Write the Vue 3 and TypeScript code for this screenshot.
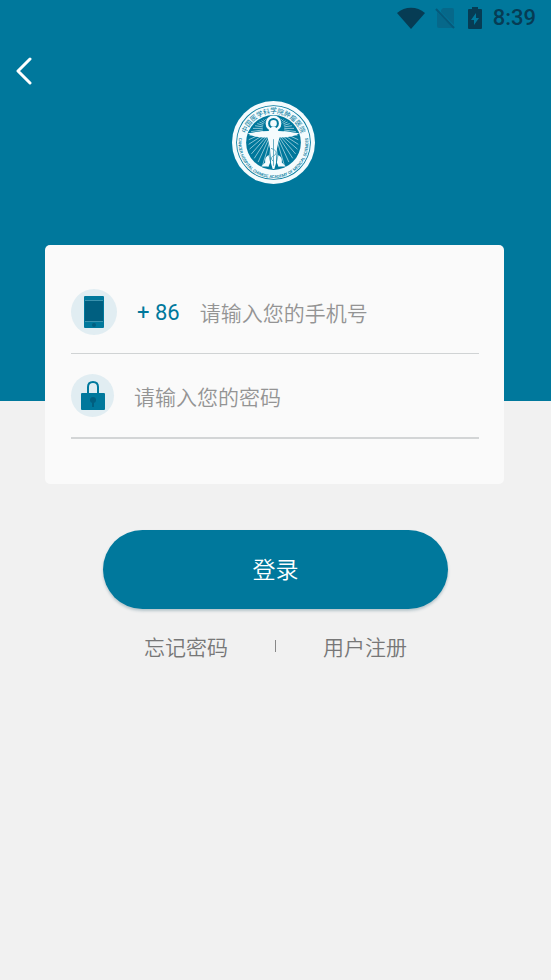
<script setup lang="ts">
import { ref } from 'vue'

const phone = ref('')
const password = ref('')

interface Ray {
  x1: number
  y1: number
  x2: number
  y2: number
}

// Light rays fanning out from the head of the emblem's figure.
const rays: Ray[] = Array.from({ length: 44 }, (_, i) => {
  const angle = (i / 44) * Math.PI * 2
  const cx = 50
  const cy = 33
  const dx = Math.cos(angle)
  const dy = Math.sin(angle)
  // Distance from the head to the inner ring (centre 50,50, radius 30).
  const b = dy * (cy - 50)
  const reach = -b + Math.sqrt(b * b + 30 * 30 - (cy - 50) ** 2)
  return {
    x1: cx + dx * 13,
    y1: cy + dy * 13,
    x2: cx + dx * Math.max(reach, 13),
    y2: cy + dy * Math.max(reach, 13),
  }
})
</script>

<template>
  <div class="page">
    <header class="hero">
      <div class="status">
        <svg class="wifi" viewBox="0 0 28 22" aria-hidden="true">
          <path d="M0 6 C8 -1 20 -1 28 6 L14 22 Z" />
        </svg>
        <svg class="sim" viewBox="0 0 20 22" aria-hidden="true">
          <path class="faint" d="M8 1 H17 Q19 1 19 3 V18 L6 5 V3 Z M2 5 L18 21 H4 Q2 21 2 19 Z" />
          <path class="slash" d="M1 2 L19 21" />
        </svg>
        <svg class="battery" viewBox="0 0 14 22" aria-hidden="true">
          <path fill-rule="evenodd" d="M4 0 H10 V2 H13 Q14 2 14 3 V21 Q14 22 13 22 H1 Q0 22 0 21 V3 Q0 2 1 2 H4 Z M8 6 L3 13 H6 V18 L11 11 H8 Z" />
        </svg>
        <span class="time">8:39</span>
      </div>
      <nav class="nav">
        <button class="back" type="button" aria-label="返回">
          <svg viewBox="0 0 18 28" aria-hidden="true">
            <path d="M15 2 L3 14 L15 26" />
          </svg>
        </button>
      </nav>
      <svg class="emblem" viewBox="0 0 100 100" aria-hidden="true">
        <defs>
          <path id="arc-top" d="M15 50 A35 35 0 0 1 85 50" />
          <path id="arc-bottom" d="M12 33 A42 42 0 1 0 88 33" />
        </defs>
        <circle class="white" cx="50" cy="50" r="50" />
        <circle class="teal" cx="50" cy="50" r="45" />
        <circle class="white" cx="50" cy="50" r="44" />
        <circle class="teal" cx="50" cy="50" r="33" />
        <text class="ring cjk"><textPath href="#arc-top" startOffset="50%">中国医学科学院肿瘤医院</textPath></text>
        <text class="ring latin"><textPath href="#arc-bottom" startOffset="50%">CANCER HOSPITAL CHINESE ACADEMY OF MEDICAL SCIENCES</textPath></text>
        <line v-for="(ray, i) in rays" :key="i" class="ray" :x1="ray.x1" :y1="ray.y1" :x2="ray.x2" :y2="ray.y2" />
        <circle class="halo" cx="50" cy="27" r="8" />
        <circle class="white" cx="50" cy="27" r="4" />
        <path class="white" d="M19 39 Q34 36 44 36 L48 31 H52 L56 36 Q66 36 81 39 Q76 44 57 44 L54 58 L53 75 L51 82 H49 L47 75 L46 58 L43 44 Q24 44 19 39 Z" />
        <path class="white" d="M44 65 Q39 68 40 74 L35 79 H44 L46 74 Z M56 65 Q61 68 60 74 L65 79 H56 L54 74 Z" />
        <path class="teal-line" d="M50 46 V78 M47 57 Q56 60 52 65 Q44 68 50 73" />
      </svg>
    </header>

    <form class="form" @submit.prevent>
      <div class="card">
        <div class="field">
          <label class="badge large" for="phone" aria-label="手机号">
            <svg class="phone-icon" viewBox="0 0 20 32" aria-hidden="true">
              <rect class="teal" width="20" height="32" rx="1" />
              <rect class="screen" x="1" y="5" width="18" height="20" />
              <rect class="bar" x="1" y="4" width="18" height="1" />
              <rect class="bar" x="1" y="25" width="18" height="1" />
              <circle class="screen" cx="10" cy="29" r="2" />
            </svg>
          </label>
          <span class="code">+ 86</span>
          <input id="phone" v-model="phone" class="entry" type="tel" placeholder="请输入您的手机号" />
        </div>
        <div class="field second">
          <label class="badge" for="password" aria-label="密码">
            <svg class="lock-icon" viewBox="0 0 24 30" aria-hidden="true">
              <path class="shackle" d="M7 14 V7 Q7 2 12 2 Q17 2 17 7 V14" />
              <rect class="teal" y="13" width="24" height="17" rx="1" />
              <circle class="screen" cx="12" cy="20" r="3" />
              <rect class="screen" x="11" y="20" width="2" height="7" />
            </svg>
          </label>
          <input id="password" v-model="password" class="entry" type="password" placeholder="请输入您的密码" />
        </div>
      </div>
      <button class="submit" type="submit">登录</button>
      <div class="links">
        <a href="#forgot">忘记密码</a>
        <span class="divider"></span>
        <a href="#register">用户注册</a>
      </div>
    </form>
  </div>
</template>

<style>
body {
  margin: 0;
  background: #f1f1f1;
}
</style>

<style scoped>
.page {
  min-height: 100vh;
  background: #f1f1f1;
  font-family: Roboto, "Noto Sans CJK SC", sans-serif;
}

.hero {
  display: flex;
  flex-direction: column;
  box-sizing: border-box;
  padding-bottom: 217px;
  background: #00789c;
}

.status {
  display: flex;
  align-items: center;
  justify-content: flex-end;
  height: 36px;
  padding-right: 15px;
  color: #063c54;
}

.status svg {
  fill: #063c54;
}

.wifi {
  width: 28px;
  height: 22px;
  margin-right: 10px;
}

.sim {
  width: 20px;
  height: 22px;
  margin-right: 13px;
}

.status .faint {
  fill: #06688a;
}

.sim .slash {
  stroke: #06597a;
  stroke-width: 2;
}

.battery {
  width: 14px;
  height: 22px;
  margin-right: 11px;
}

.time {
  font-size: 22px;
  line-height: 36px;
  font-weight: 500;
}

.nav {
  display: flex;
  height: 65px;
  padding-left: 15px;
}

.back {
  display: flex;
  align-items: center;
  width: 44px;
  height: 70px;
  padding: 0;
  border: 0;
  background: none;
  cursor: pointer;
}

.back svg {
  width: 18px;
  height: 28px;
  fill: none;
  stroke: #fff;
  stroke-width: 3;
  stroke-linecap: round;
  stroke-linejoin: round;
}

.emblem {
  align-self: center;
  width: 83px;
  height: 83px;
  margin-right: 4px;
}

.white {
  fill: #f4fbfd;
}

.teal {
  fill: #00789c;
}

.halo {
  fill: #00789c;
  stroke: #f4fbfd;
  stroke-width: 3;
}

.ray {
  stroke: #a9d3df;
  stroke-width: 1;
}

.teal-line {
  fill: none;
  stroke: #4e9fb8;
  stroke-width: 1;
}

.ring {
  fill: #00789c;
  text-anchor: middle;
}

.cjk {
  font-size: 8px;
}

.latin {
  font-size: 5px;
  font-weight: 500;
}

.form {
  position: relative;
  display: flex;
  flex-direction: column;
  margin-top: -156px;
  padding: 0 47px 0 45px;
}

.card {
  padding: 26px 25px 45px 26px;
  border-radius: 5px;
  background: #fafafa;
}

.field {
  display: flex;
  align-items: center;
  height: 82px;
  border-bottom: 1px solid #d0d3d4;
}

.second {
  height: 83px;
  border-bottom: 2px solid #d3d5d6;
}

.badge {
  display: flex;
  flex: none;
  align-items: center;
  justify-content: center;
  width: 43px;
  height: 43px;
  margin-right: 20px;
  border-radius: 50%;
  background: #e1edf2;
}

.large {
  width: 46px;
  height: 46px;
}

.phone-icon {
  width: 20px;
  height: 32px;
}

.lock-icon {
  width: 24px;
  height: 30px;
  margin-bottom: 2px;
}

.screen {
  fill: #005f80;
}

.bar {
  fill: #3b93ae;
}

.shackle {
  fill: none;
  stroke: #00789c;
  stroke-width: 2;
}

.code {
  margin-right: 20px;
  padding-top: 2px;
  color: #00789c;
  font-size: 22px;
  line-height: 32px;
  white-space: nowrap;
}

.entry {
  flex: 1;
  min-width: 0;
  height: 40px;
  padding: 0;
  border: 0;
  outline: 0;
  background: none;
  color: #444;
  font-family: "Noto Sans CJK SC", sans-serif;
  font-size: 21px;
  font-weight: 350;
}

.entry::placeholder {
  color: #949494;
  opacity: 1;
}

.submit {
  height: 79px;
  margin: 46px 56px 0 58px;
  padding: 0 0 4px;
  border: 0;
  border-radius: 40px;
  background: #00789c;
  box-shadow: 0 2px 3px #b5c4ca;
  color: #fff;
  font-family: "Noto Sans CJK SC", sans-serif;
  font-size: 23px;
  font-weight: 350;
  cursor: pointer;
}

.links {
  display: flex;
  align-items: center;
  justify-content: center;
  gap: 47px;
  margin-top: 21px;
  padding-left: 2px;
}

.links a {
  color: #777;
  font-family: "Noto Sans CJK SC", sans-serif;
  font-size: 21px;
  font-weight: 350;
  line-height: 32px;
  text-decoration: none;
}

.divider {
  width: 1px;
  height: 12px;
  background: #888;
}
</style>
